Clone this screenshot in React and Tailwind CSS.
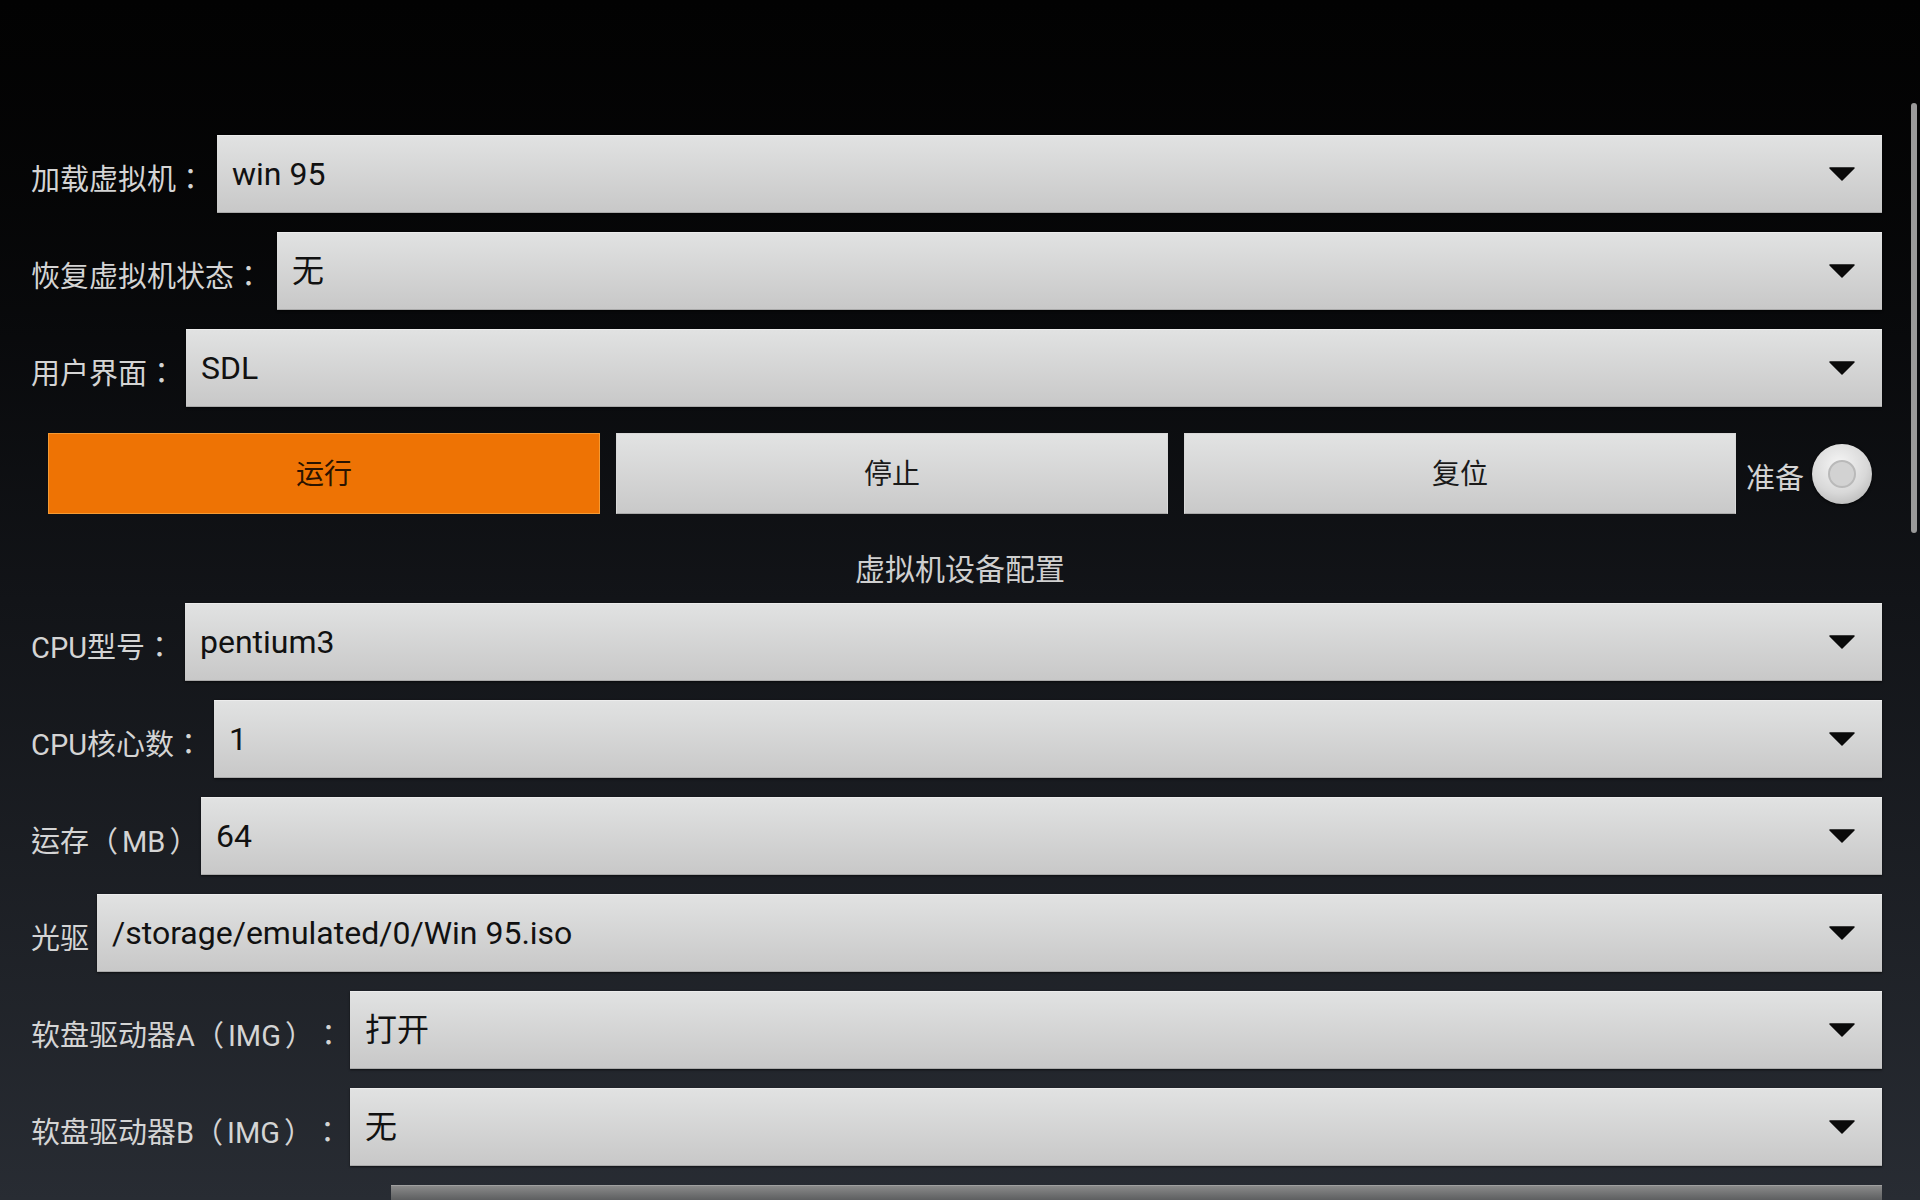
import React from 'react';

const latin = "font-['Roboto','Noto_Sans_CJK_SC',sans-serif]";
// centered full-width punctuation for the label column
const labelFont = "font-['Roboto','Noto_Sans_CJK_TC',sans-serif] [text-spacing-trim:space-all]";

const Unit = ({ children }) => <span className="px-[4px]">{children}</span>;

// label column widths keep each spinner starting where the form expects it
const launchRows = [
  { id: 'vm', label: '加载虚拟机：', value: 'win 95', w: 'w-[217px]' },
  { id: 'state', label: '恢复虚拟机状态：', value: '无', w: 'w-[277px]' },
  { id: 'ui', label: '用户界面：', value: 'SDL', w: 'w-[186px]' },
];

const deviceRows = [
  { id: 'cpu', label: 'CPU型号：', value: 'pentium3', w: 'w-[185px]' },
  { id: 'cores', label: 'CPU核心数：', value: '1', w: 'w-[214px]' },
  { id: 'mem', label: <>运存（<Unit>MB</Unit>）</>, value: '64', w: 'w-[201px]' },
  { id: 'cd', label: '光驱', value: '/storage/emulated/0/Win 95.iso', w: 'w-[97px]' },
  { id: 'fda', label: <>软盘驱动器A（<Unit>IMG</Unit>）：</>, value: '打开', w: 'w-[350px]' },
  { id: 'fdb', label: <>软盘驱动器B（<Unit>IMG</Unit>）：</>, value: '无', w: 'w-[350px]' },
];

const Caret = () => (
  <svg width="26" height="14" viewBox="0 0 26 14" className="shrink-0">
    <polygon points="1,1 25,1 13,13" fill="#0a0a0a" stroke="#0a0a0a" strokeWidth="1.5" strokeLinejoin="round" />
  </svg>
);

const Spinner = ({ value }) => (
  <div className="flex h-[78px] flex-1 items-center justify-between border-t border-b border-t-[#ececec] border-b-[#a9a9a9] bg-gradient-to-b from-[#e1e2e2] to-[#c8c8c8] pl-[15px] pr-[27px] shadow-[0_1px_2px_rgba(0,0,0,.6)]">
    <span className={`${latin} text-[32px] leading-none text-[#111]`}>{value}</span>
    <Caret />
  </div>
);

const Row = ({ label, value, w }) => (
  <div className="flex items-center">
    <div className={`${w} ${labelFont} shrink-0 pl-[31px] pt-[13px] text-[29px] leading-none whitespace-nowrap text-[#d4d4d4]`}>{label}</div>
    <Spinner value={value} />
  </div>
);

const Button = ({ children, primary }) => (
  <button
    type="button"
    className={`flex h-[81px] w-[552px] shrink-0 items-center justify-center border text-[28px] ${
      primary
        ? 'border-[#f59a33] bg-[#ee7304] text-[#2a1300]'
        : 'border-[#d9d9d9] border-b-[#a9a9a9] bg-gradient-to-b from-[#e2e3e3] to-[#c9c9c9] text-[#1a1a1a]'
    }`}
  >
    <span className="pt-[3px]">{children}</span>
  </button>
);

export default function App() {
  return (
    <div className={`relative h-screen w-full overflow-hidden bg-gradient-to-b from-[#020202] via-[#121418] to-[#282c33] ${latin}`}>
      <div className="flex flex-col pt-[135px] pr-[38px]">
        <div className="flex flex-col gap-[19px]">
          {launchRows.map((r) => (
            <Row key={r.id} {...r} />
          ))}
        </div>

        <div className="mt-[26px] flex items-center pl-[48px]">
          <div className="flex gap-[16px]">
            <Button primary>运行</Button>
            <Button>停止</Button>
            <Button>复位</Button>
          </div>
          <span className="ml-[10px] pt-[12px] text-[29px] leading-none text-[#d4d4d4]">准备</span>
          <div className="ml-[8px] flex h-[60px] w-[60px] items-center justify-center rounded-full bg-[radial-gradient(circle_at_45%_35%,#f6f6f6,#d8d8d8_55%,#a8a8a8)] shadow-[0_1px_3px_rgba(0,0,0,.8)]">
            <div className="h-[28px] w-[28px] rounded-full border-2 border-[#b9b9b9] bg-[#d2d2d2]" />
          </div>
        </div>

        <div className="mt-[41px] mb-[18px] pl-[38px] text-center text-[30px] leading-none text-[#cfcfcf]">虚拟机设备配置</div>

        <div className="flex flex-col gap-[19px]">
          {deviceRows.map((r) => (
            <Row key={r.id} {...r} />
          ))}
          <div className="ml-[391px] h-[20px] border-t border-[#a0a0a0] bg-gradient-to-b from-[#8a8a8a] to-[#4e5052]" />
        </div>
      </div>

      {/* scroll indicator */}
      <div className="absolute top-[103px] right-[3px] h-[430px] w-[6px] rounded-full bg-[#9a9a9a]" />
    </div>
  );
}
